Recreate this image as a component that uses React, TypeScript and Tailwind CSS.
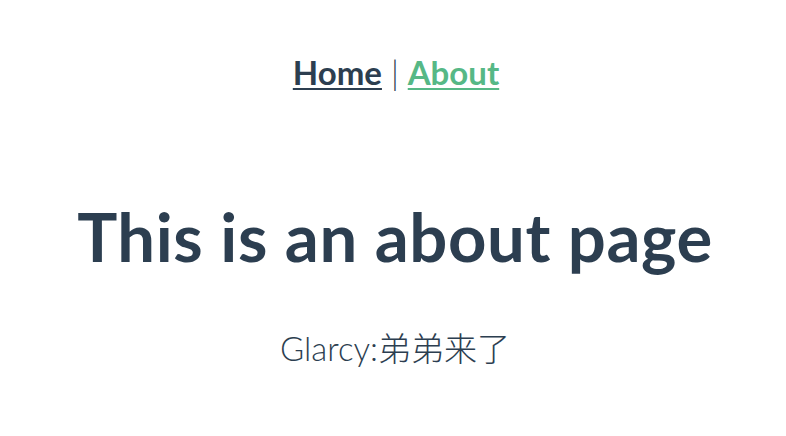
export default function App() {
  return (
    <div
      className="w-[786px] h-[436px] bg-white text-center text-[#2c3e50] flex flex-col items-center"
      style={{ fontFamily: 'Lato, "Noto Sans CJK SC", sans-serif' }}
    >
      <div className="pt-[50px] pl-[6px] text-[33px] leading-[44px] font-bold">
        <a className="underline underline-offset-[3px] decoration-[2px] text-[#2c3e50]">Home</a>
        <span className="font-light text-[#2c3e50]"> | </span>
        <a className="underline underline-offset-[3px] decoration-[2px] text-[#56b886]">About</a>
      </div>
      <h1 className="mt-[102px] pl-[4px] text-[67px] leading-[80px] font-bold tracking-[0.6px]">This is an about page</h1>
      <p className="mt-[50px] pl-[4px] text-[33px] leading-[44px] font-light">
        Glarcy:弟弟来了
      </p>
    </div>
  );
}
